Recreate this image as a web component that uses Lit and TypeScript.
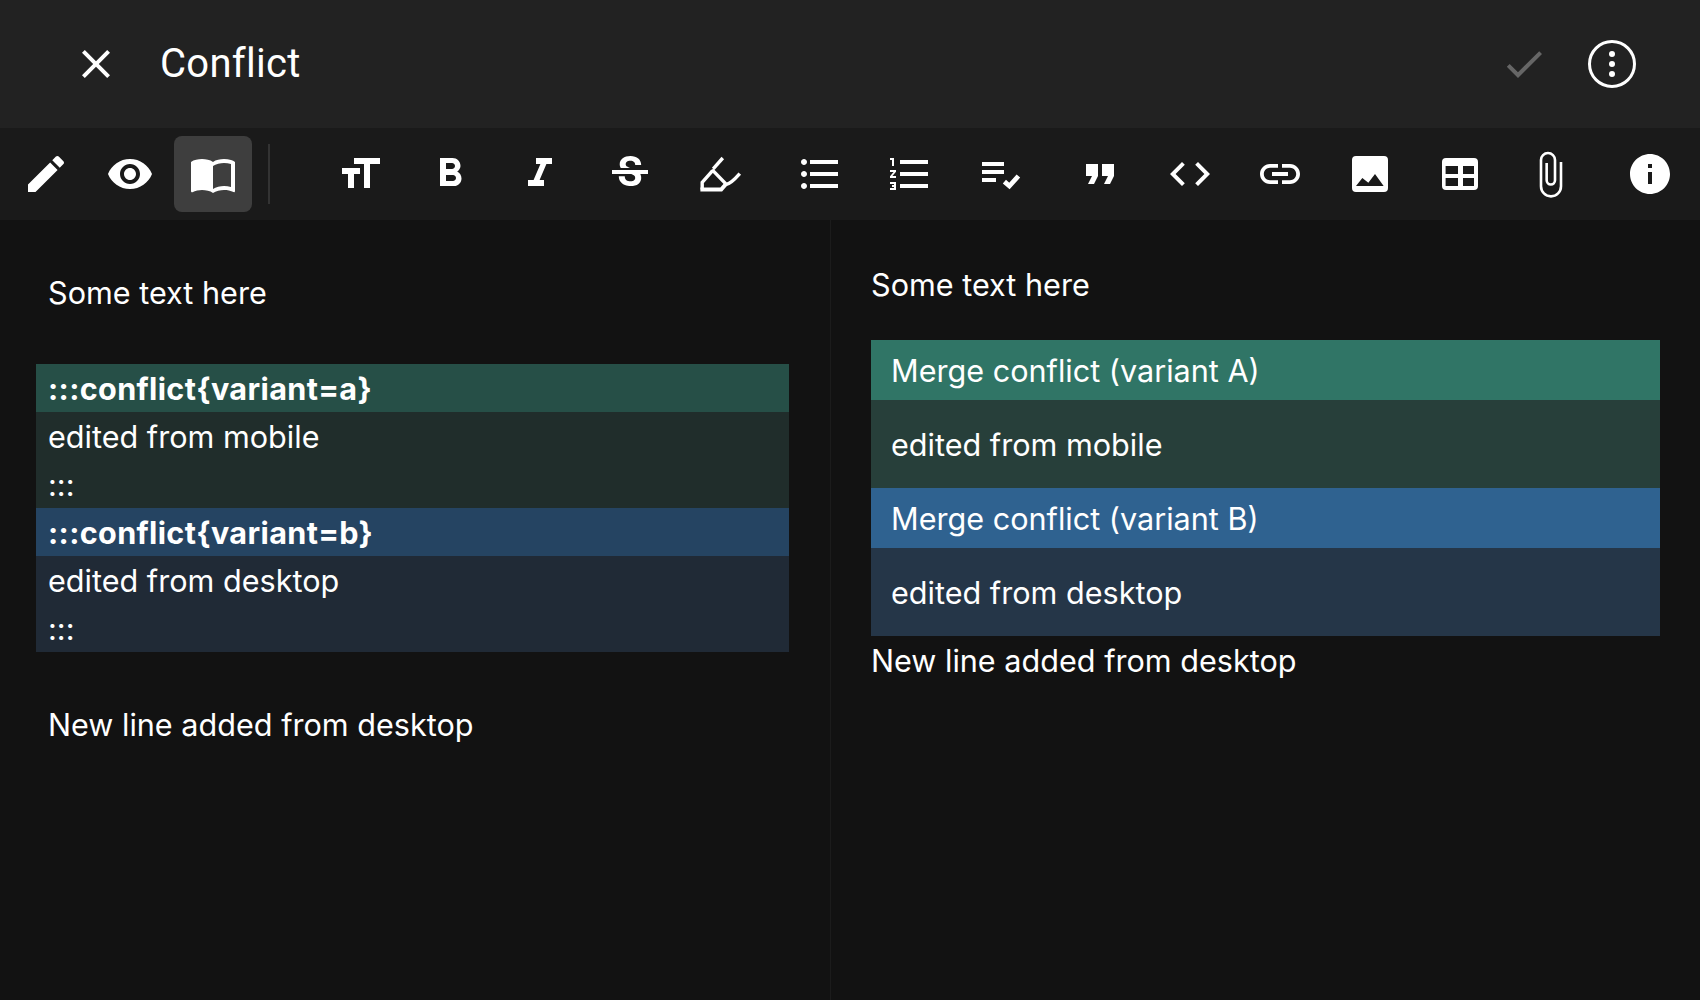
import { LitElement, css, html, svg } from 'lit';
import { customElement } from 'lit/decorators.js';

const icons: Record<string, unknown> = {
  close: svg`<path d="M19 6.41L17.59 5 12 10.59 6.41 5 5 6.41 10.59 12 5 17.59 6.41 19 12 13.41 17.59 19 19 17.59 13.41 12z"/>`,
  check: svg`<path d="M9 16.17L4.83 12l-1.42 1.41L9 19 21 7l-1.41-1.41z"/>`,
  edit: svg`<path d="M3 17.25V21h3.75L17.81 9.94l-3.75-3.75L3 17.25zM20.71 7.04c.39-.39.39-1.02 0-1.41l-2.34-2.34c-.39-.39-1.02-.39-1.41 0l-1.83 1.83 3.75 3.75 1.83-1.83z"/>`,
  eye: svg`<path d="M12 4.5C7 4.5 2.73 7.61 1 12c1.73 4.39 6 7.5 11 7.5s9.27-3.11 11-7.5c-1.73-4.39-6-7.5-11-7.5zM12 17c-2.76 0-5-2.24-5-5s2.24-5 5-5 5 2.24 5 5-2.24 5-5 5zm0-8c-1.66 0-3 1.34-3 3s1.34 3 3 3 3-1.34 3-3-1.34-3-3-3z"/>`,
  book: svg`<path d="M21 5c-1.11-.35-2.33-.5-3.5-.5-1.95 0-4.05.4-5.5 1.5-1.45-1.1-3.55-1.5-5.5-1.5S2.45 4.9 1 6v14.65c0 .25.25.5.5.5.1 0 .15-.05.25-.05C3.1 20.45 5.05 20 6.5 20c1.95 0 4.05.4 5.5 1.5 1.35-.85 3.8-1.5 5.5-1.5 1.65 0 3.35.3 4.75 1.05.1.05.15.05.25.05.25 0 .5-.25.5-.5V6c-.6-.45-1.25-.75-2-1zm0 13.5c-1.1-.35-2.3-.5-3.5-.5-1.7 0-4.15.65-5.5 1.5V8c1.35-.85 3.8-1.5 5.5-1.5 1.2 0 2.4.15 3.5.5v11.5z"/>`,
  size: svg`<path d="M9 4v3h5v12h3V7h5V4H9zm-6 8h3v7h3v-7h3V9H3v3z"/>`,
  bold: svg`<path d="M15.6 10.79c.97-.67 1.65-1.77 1.65-2.79 0-2.26-1.75-4-4-4H7v14h7.04c2.09 0 3.71-1.7 3.71-3.79 0-1.52-.86-2.82-2.15-3.42zM10 6.5h3c.83 0 1.5.67 1.5 1.5s-.67 1.5-1.5 1.5h-3v-3zm3.5 9H10v-3h3.5c.83 0 1.5.67 1.5 1.5s-.67 1.5-1.5 1.5z"/>`,
  italic: svg`<path d="M10 4v3h2.21l-3.42 8H6v3h8v-3h-2.21l3.42-8H18V4z"/>`,
  strike: svg`<path d="M7.24 8.75c-.26-.48-.39-1.03-.39-1.67 0-.61.13-1.16.4-1.67.26-.5.63-.93 1.11-1.29.48-.35 1.05-.63 1.7-.83.66-.19 1.39-.29 2.18-.29.81 0 1.54.11 2.21.34.66.22 1.23.54 1.69.94.47.4.83.88 1.08 1.43.25.55.38 1.15.38 1.81h-3.01c0-.31-.05-.59-.15-.85-.09-.27-.24-.49-.44-.68-.2-.19-.45-.33-.75-.44-.3-.1-.66-.16-1.06-.16-.39 0-.74.04-1.03.13-.29.09-.53.21-.72.36-.19.16-.34.34-.44.55-.1.21-.15.43-.15.66 0 .48.25.88.74 1.21.38.25.77.48 1.41.7H7.39c-.05-.08-.11-.17-.15-.25zM21 12v-2H3v2h9.62c.18.07.4.14.55.2.37.17.66.34.87.51.21.17.35.36.43.57.07.2.11.43.11.69 0 .23-.05.45-.14.66-.09.2-.23.38-.42.53-.19.15-.42.26-.71.35-.29.08-.63.13-1.01.13-.43 0-.83-.04-1.18-.13s-.66-.23-.91-.42c-.25-.19-.45-.44-.59-.75-.14-.31-.25-.76-.25-1.21H6.4c0 .55.08 1.13.24 1.58.16.45.37.85.65 1.21.28.35.6.66.98.92.37.26.78.48 1.22.65.44.17.9.3 1.38.39.48.08.96.13 1.44.13.8 0 1.53-.09 2.18-.28s1.21-.45 1.67-.79c.46-.34.82-.77 1.07-1.27s.38-1.07.38-1.71c0-.6-.1-1.14-.31-1.61-.05-.11-.11-.23-.17-.33H21z"/>`,
  highlight: svg`<path fill="none" stroke="currentColor" stroke-width="1.7" d="M13.4 4L8.6 9.4"/><path fill="none" stroke="currentColor" stroke-width="1.7" d="M8.3 10.3L3.1 16.2V19.8"/><path fill="none" stroke="currentColor" stroke-width="2" d="M2.2 19.8H12.6L15 17"/><path fill="none" stroke="currentColor" stroke-width="1.7" d="M8 9.8L15.2 17.2C17.6 16.8 19.6 14.4 21.9 11.8"/>`,
  ul: svg`<path d="M4 10.5c-.83 0-1.5.67-1.5 1.5s.67 1.5 1.5 1.5 1.5-.67 1.5-1.5-.67-1.5-1.5-1.5zm0-6c-.83 0-1.5.67-1.5 1.5S3.17 7.5 4 7.5 5.5 6.83 5.5 6 4.83 4.5 4 4.5zm0 12c-.83 0-1.5.68-1.5 1.5s.68 1.5 1.5 1.5 1.5-.68 1.5-1.5-.67-1.5-1.5-1.5zM7 19h14v-2H7v2zm0-6h14v-2H7v2zm0-8v2h14V5H7z"/>`,
  ol: svg`<path d="M2 17h2v.5H3v1h1v.5H2v1h3v-4H2v1zm1-9h1V4H2v1h1v3zm-1 3h1.8L2 13.1v.9h3v-1H3.2L5 10.9V10H2v1zm5-6v2h14V5H7zm0 14h14v-2H7v2zm0-6h14v-2H7v2z"/>`,
  checklist: svg`<path d="M3 6h11v2H3zM3 10h11v2H3zM3 14h7v2H3z"/><path fill="none" stroke="currentColor" stroke-width="2.4" d="M14.2 15.8L16.7 18L21.2 13"/>`,
  quote: svg`<path d="M6 17h3l2-4V7H5v6h3zm8 0h3l2-4V7h-6v6h3z"/>`,
  code: svg`<path d="M9.4 16.6L4.8 12l4.6-4.6L8 6l-6 6 6 6 1.4-1.4zm5.2 0l4.6-4.6-4.6-4.6L16 6l6 6-6 6-1.4-1.4z"/>`,
  link: svg`<path d="M3.9 12c0-1.71 1.39-3.1 3.1-3.1h4V7H7c-2.76 0-5 2.24-5 5s2.24 5 5 5h4v-1.9H7c-1.71 0-3.1-1.39-3.1-3.1zM8 13h8v-2H8v2zm9-6h-4v1.9h4c1.71 0 3.1 1.39 3.1 3.1s-1.39 3.1-3.1 3.1h-4V17h4c2.76 0 5-2.24 5-5s-2.24-5-5-5z"/>`,
  image: svg`<path fill-rule="evenodd" d="M5 3h14a2 2 0 012 2v14a2 2 0 01-2 2H5a2 2 0 01-2-2V5a2 2 0 012-2zM5 18L8.17 14l3 2.4L14.5 12l4.33 6z"/>`,
  table: svg`<path fill-rule="evenodd" d="M5 4h14a2 2 0 012 2v12a2 2 0 01-2 2H5a2 2 0 01-2-2V6a2 2 0 012-2zM4.8 8v4H11V8zM13.5 8v4H19V8zM4.8 14v4H11v-4zM13.5 14v4H19v-4z"/>`,
  clip: svg`<path fill="none" stroke="currentColor" stroke-width="1.3" d="M10.33 6.5V15.17a2.08 2.08 0 0 0 4.17 0V5a3.5 3.5 0 0 0-7 0V18.17a5 5 0 0 0 10 0V6"/>`,
  info: svg`<path d="M12 2C6.48 2 2 6.48 2 12s4.48 10 10 10 10-4.48 10-10S17.52 2 12 2zm1 15h-2v-6h2v6zm0-8h-2V7h2v2z"/>`,
};

const icon = (name: string) => html`<svg viewBox="0 0 24 24" width="48" height="48" fill="currentColor">${icons[name]}</svg>`;

// format buttons come in three runs with a little extra room between them
const toolGroups = [
  ['size', 'bold', 'italic', 'strike', 'highlight'],
  ['ul', 'ol', 'checklist'],
  ['quote', 'code', 'link', 'image', 'table', 'clip'],
];

@customElement('app-root')
export class AppRoot extends LitElement {
  static styles = css`
    :host {
      display: block;
      height: 1000px;
      overflow: hidden;
      background: #121212;
      color: #fff;
      font-family: Inter, 'Liberation Sans', sans-serif;
    }
    svg {
      display: block;
      flex: none;
    }
    .header {
      height: 128px;
      background: #222222;
      display: flex;
      align-items: center;
      padding: 0 64px 0 72px;
    }
    .close {
      width: 48px;
      height: 48px;
    }
    .title {
      margin-left: 40px;
      flex: 1;
      font: 400 40px/48px Roboto, sans-serif;
      font-variant-ligatures: none;
      letter-spacing: 0.3px;
    }
    .save {
      color: #666666;
      margin-right: 40px;
    }
    .more {
      width: 48px;
      height: 48px;
      box-sizing: border-box;
      border: 3px solid #fff;
      border-radius: 50%;
      display: flex;
      flex-direction: column;
      align-items: center;
      justify-content: center;
      gap: 4px;
    }
    .more i {
      width: 6px;
      height: 6px;
      border-radius: 50%;
      background: #fff;
    }
    .toolbar {
      height: 92px;
      box-sizing: border-box;
      background: #1a1a1a;
      display: flex;
      align-items: center;
      padding: 0 11px 0 7px;
    }
    .modes {
      display: flex;
      gap: 5.5px;
    }
    .btn {
      width: 78px;
      height: 76px;
      border-radius: 8px;
      display: flex;
      align-items: center;
      justify-content: center;
    }
    .btn.on {
      background: #3e3e3e;
    }
    .sep {
      width: 2px;
      height: 60px;
      background: #333333;
      margin: 0 45px 0 16px;
    }
    .tools {
      display: flex;
      gap: 10px;
    }
    .group {
      display: flex;
    }
    .tool {
      width: 90px;
      height: 76px;
      display: flex;
      align-items: center;
      justify-content: center;
    }
    .info {
      margin-left: auto;
    }
    .panes {
      display: flex;
      height: 780px;
    }
    .editor {
      width: 831px;
      box-sizing: border-box;
      padding: 49px 41px 0 36px;
      border-right: 1px solid #1c1c1c;
      flex: none;
      font-size: 30.6px;
      line-height: 48px;
    }
    .editor p {
      margin: 0;
      padding-left: 12px;
    }
    .editor .conflict {
      margin: 47px 0 49px;
    }
    .line {
      height: 48px;
      box-sizing: border-box;
      padding: 1px 0 0 12px;
    }
    .line.head {
      font-weight: 700;
      letter-spacing: 0.35px;
    }
    .a-head { background: #264f47; }
    .a-body { background: #202d2b; }
    .b-head { background: #254462; }
    .b-body { background: #202a36; }
    .preview {
      flex: 1;
      padding: 41px 40px 0 40px;
      font-size: 30.6px;
      line-height: 48px;
    }
    .preview p {
      margin: 0;
    }
    .blocks {
      margin: 31px 0 1px;
    }
    .blocks div {
      padding: 1px 0 0 20px;
      box-sizing: border-box;
      display: flex;
      align-items: center;
    }
    .blocks .title-a { height: 60px; background: #307566; }
    .blocks .text-a { height: 88px; background: #273f3a; }
    .blocks .title-b { height: 60px; background: #2f6290; }
    .blocks .text-b { height: 88px; background: #253648; }
  `;

  render() {
    return html`
      <div class="header">
        <div class="close">${icon('close')}</div>
        <div class="title">Conflict</div>
        <div class="save">${icon('check')}</div>
        <div class="more"><i></i><i></i><i></i></div>
      </div>
      <div class="toolbar">
        <div class="modes">
          <div class="btn">${icon('edit')}</div>
          <div class="btn">${icon('eye')}</div>
          <div class="btn on">${icon('book')}</div>
        </div>
        <div class="sep"></div>
        <div class="tools">
          ${toolGroups.map(
            (group) => html`<div class="group">${group.map((name) => html`<div class="tool">${icon(name)}</div>`)}</div>`,
          )}
        </div>
        <div class="btn info">${icon('info')}</div>
      </div>
      <div class="panes">
        <div class="editor">
          <p>Some text here</p>
          <div class="conflict">
            <div class="line head a-head">:::conflict{variant=a}</div>
            <div class="line a-body">edited from mobile</div>
            <div class="line a-body">:::</div>
            <div class="line head b-head">:::conflict{variant=b}</div>
            <div class="line b-body">edited from desktop</div>
            <div class="line b-body">:::</div>
          </div>
          <p>New line added from desktop</p>
        </div>
        <div class="preview">
          <p>Some text here</p>
          <div class="blocks">
            <div class="title-a">Merge conflict (variant A)</div>
            <div class="text-a">edited from mobile</div>
            <div class="title-b">Merge conflict (variant B)</div>
            <div class="text-b">edited from desktop</div>
          </div>
          <p>New line added from desktop</p>
        </div>
      </div>
    `;
  }
}
